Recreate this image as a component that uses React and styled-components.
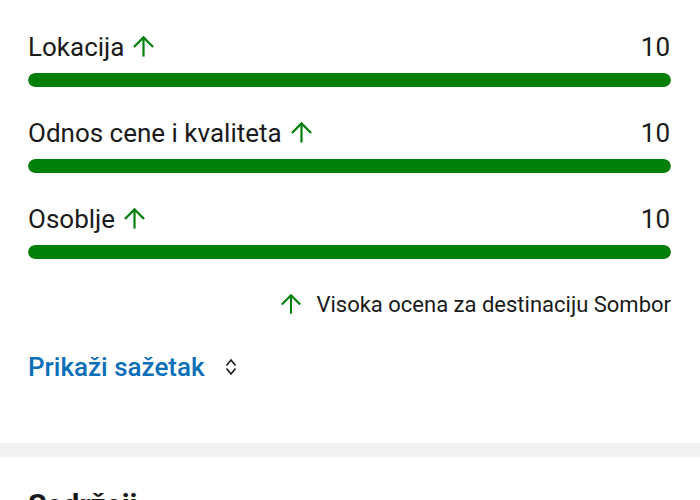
import React from 'react';
import styled, { createGlobalStyle } from 'styled-components';

const GlobalStyle = createGlobalStyle`
  body {
    margin: 0;
    background: #fff;
    font-family: Roboto, "Noto Sans", sans-serif;
    color: #1a1a1a;
  }
`;

const scores = [
  { label: 'Lokacija', value: 10 },
  { label: 'Odnos cene i kvaliteta', value: 10 },
  { label: 'Osoblje', value: 10 },
];

function UpArrow({ size = 23 }) {
  return (
    <svg width={size} height={size} viewBox="0 0 24 24" fill="none" stroke="#008009" strokeWidth="2.3" strokeLinecap="butt" strokeLinejoin="miter">
      <path d="M12 22.5V2.5" />
      <path d="M2 12.5 12 2.5l10 10" />
    </svg>
  );
}

function SortIcon() {
  return (
    <svg width="12" height="20" viewBox="0 0 12 20" fill="none" stroke="#1a1a1a" strokeWidth="1.6">
      <path d="M1.5 8.5 6 3l4.5 5.5" />
      <path d="M1.5 11.5 6 17l4.5-5.5" />
    </svg>
  );
}

export default function App() {
  return (
    <>
      <GlobalStyle />
      <Section>
        {scores.map((s) => (
          <ScoreRow key={s.label}>
            <ScoreHead>
              <Label>
                {s.label}
                <UpArrow />
              </Label>
              <Value>{s.value}</Value>
            </ScoreHead>
            <Track>
              <Fill style={{ width: `${s.value * 10}%` }} />
            </Track>
          </ScoreRow>
        ))}
        <Note>
          <UpArrow size={22} />
          Visoka ocena za destinaciju Sombor
        </Note>
        <SummaryLink>
          Prikaži sažetak
          <SortIcon />
        </SummaryLink>
      </Section>
      <Divider />
      <NextSection>
        <Heading>Sadržaji</Heading>
      </NextSection>
    </>
  );
}

const Section = styled.section`
  padding: 31px 29px 0 28px;
  height: 412px;
  box-sizing: border-box;
`;

const ScoreRow = styled.div`
  display: flex;
  flex-direction: column;
  gap: 10px;
  margin-bottom: 30px;
`;

const ScoreHead = styled.div`
  display: flex;
  align-items: center;
  justify-content: space-between;
  height: 32px;
  font-size: 26px;
`;

const Label = styled.div`
  display: flex;
  align-items: center;
  gap: 8px;
  & svg {
    margin-top: -2px;
  }
`;

const Value = styled.div`
  padding-right: 1px;
`;

const Track = styled.div`
  height: 14px;
  border-radius: 7px;
  background: #e7e7e7;
  overflow: hidden;
`;

const Fill = styled.div`
  height: 100%;
  background: #008009;
  border-radius: 7px;
`;

const Note = styled.div`
  display: flex;
  align-items: center;
  justify-content: flex-end;
  gap: 14px;
  font-size: 22px;
  height: 30px;
`;

const SummaryLink = styled.a`
  display: flex;
  align-items: center;
  gap: 20px;
  margin-top: 32px;
  height: 32px;
  font-size: 26px;
  font-weight: 500;
  color: #0a6fb8;
  cursor: pointer;
`;

const Divider = styled.div`
  height: 14px;
  margin-top: 31px;
  background: #f2f2f2;
`;

const NextSection = styled.section`
  padding: 30px 28px 0;
`;

const Heading = styled.h2`
  margin: 0;
  font-size: 30px;
  font-weight: 700;
  line-height: 36px;
`;
